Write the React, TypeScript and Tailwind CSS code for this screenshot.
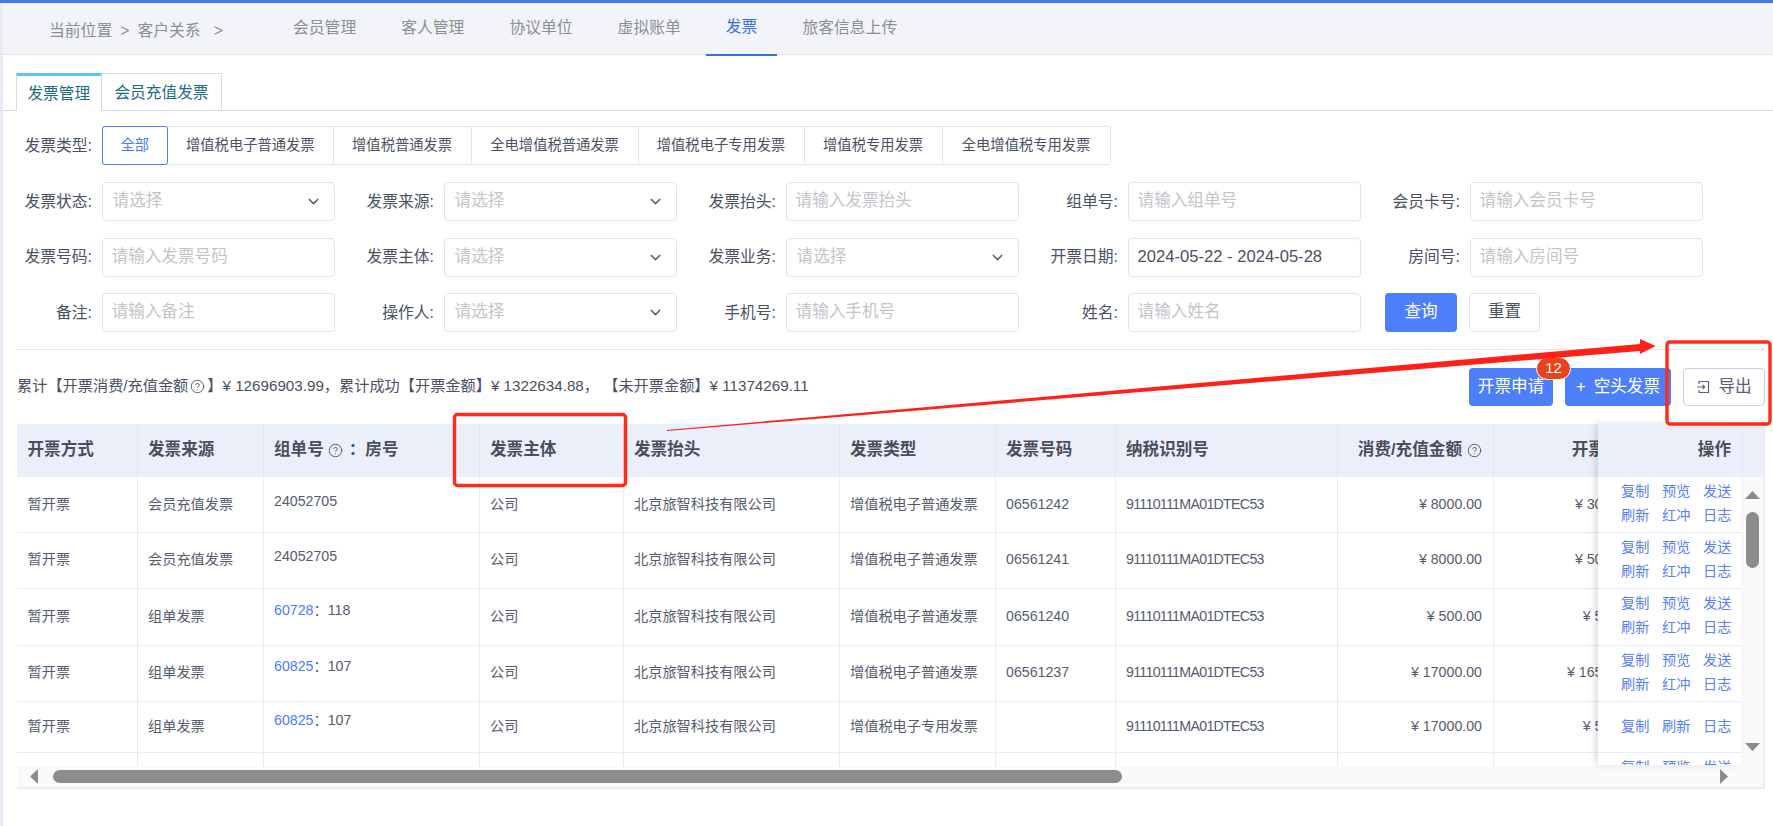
import React from "react";
import { ChevronDown, CircleHelp } from "lucide-react";

const headers = [
  { t: "开票方式", w: "w-[120.5px]" },
  { t: "发票来源", w: "w-[126px]" },
  { t: "组单号", w: "w-[216px]" },
  { t: "发票主体", w: "w-[144px]" },
  { t: "发票抬头", w: "w-[216px]" },
  { t: "发票类型", w: "w-[156px]" },
  { t: "发票号码", w: "w-[120px]" },
  { t: "纳税识别号", w: "w-[222px]" },
  { t: "消费/充值金额", w: "w-[156px]" },
  { t: "开票金额", w: "w-[156px]" },
];

const rows = [
  { h: "h-[55.5px]", src: "会员充值发票", plain: "24052705", link: "", room: "", pad: "pb-[6px]", type: "增值税电子普通发票", no: "06561242", amt: "¥ 8000.00", inv: "¥ 3000.00", two: true },
  { h: "h-[56px]", src: "会员充值发票", plain: "24052705", link: "", room: "", pad: "pb-[6px]", type: "增值税电子普通发票", no: "06561241", amt: "¥ 8000.00", inv: "¥ 5000.00", two: true },
  { h: "h-[57px]", src: "组单发票", plain: "", link: "60728", room: "118", pad: "pb-[12px]", type: "增值税电子普通发票", no: "06561240", amt: "¥ 500.00", inv: "¥ 500.00", two: true },
  { h: "h-[56px]", src: "组单发票", plain: "", link: "60825", room: "107", pad: "pb-[12px]", type: "增值税电子普通发票", no: "06561237", amt: "¥ 17000.00", inv: "¥ 16500.00", two: true },
  { h: "h-[51px]", src: "组单发票", plain: "", link: "60825", room: "107", pad: "pb-[12px]", type: "增值税电子专用发票", no: "", amt: "¥ 17000.00", inv: "¥ 500.00", two: false },
];

const typeButtons = [
  { t: "增值税电子普通发票", w: "w-[165.5px]" },
  { t: "增值税普通发票", w: "w-[138px]" },
  { t: "全电增值税普通发票", w: "w-[167px]" },
  { t: "增值税电子专用发票", w: "w-[166px]" },
  { t: "增值税专用发票", w: "w-[138px]" },
  { t: "全电增值税专用发票", w: "w-[167px]" },
];

function Field({ label, children }: { label: string; children: React.ReactNode }) {
  return (
    <div className="flex w-[318px] items-center">
      <div className="mr-[9.6px] w-[75px] text-right text-[15.8px] whitespace-nowrap text-[#4a5163]">{label}:</div>
      {children}
    </div>
  );
}

function TextBox({ text, value }: { text: string; value?: boolean }) {
  return (
    <div className={`flex h-[39px] w-[233.4px] items-center rounded-[4px] border border-[#e0e4ef] pl-[9px] text-[16.6px] whitespace-nowrap ${value ? "text-[#4a5163]" : "text-[#c3c5ca]"}`}>
      {text}
    </div>
  );
}

function SelectBox() {
  return (
    <div className="flex h-[39px] w-[233.4px] items-center justify-between rounded-[4px] border border-[#e0e4ef] pr-[12px] pl-[10px] text-[16.6px] text-[#c3c5ca]">
      <span>请选择</span>
      <ChevronDown size={17} strokeWidth={2} className="text-[#5a6478]" />
    </div>
  );
}

function OpLine({ items }: { items: string[] }) {
  return (
    <div className="flex h-[24px] items-center justify-end gap-[13px] pr-[10px] text-[14.2px] text-[#5a80f5]">
      {items.map((x) => (
        <span key={x} className="w-[28px] whitespace-nowrap">{x}</span>
      ))}
    </div>
  );
}

function HelpIcon() {
  return <CircleHelp size={15} strokeWidth={1.6} className="shrink-0 font-normal text-[#5c6272]" />;
}

export default function App() {
  return (
    <div className="relative h-[826px] w-full overflow-hidden bg-white [font-family:'Liberation_Sans','Noto_Sans_CJK_SC',sans-serif]">
      <div className="h-[3px] bg-[#3f78ee]" />
      <div className="h-[823px] border-l-[3px] border-[#e8eaf5]">
        {/* top navigation */}
        <header className="flex h-[52px] items-stretch border-b border-[#e2e4e8] bg-[#f2f4f8]">
          <div className="flex w-[270px] items-center pt-[5px] pl-[46px] text-[15.8px] text-[#8b8f98]">
            <span>当前位置</span>
            <span className="ml-[8px]">&gt;</span>
            <span className="ml-[8px]">客户关系</span>
            <span className="ml-[13px]">&gt;</span>
          </div>
          <nav className="flex gap-[5px] text-[15.8px] text-[#8b8f98]">
            {["会员管理", "客人管理", "协议单位", "虚拟账单", "发票", "旅客信息上传"].map((t) => (
              <div
                key={t}
                className={`flex h-[53px] items-center px-[20px] pb-[4px] ${t === "发票" ? "border-b-2 border-[#3a6fdc] text-[#3a6fdc]" : ""}`}
              >
                {t}
              </div>
            ))}
          </nav>
        </header>

        {/* sub tabs */}
        <div className="mt-[18px] flex h-[38px] border-b border-[#d8dde3] pl-[12.5px] text-[15.7px] text-[#1f6b80]">
          <div className="flex h-[38px] w-[86.5px] items-center justify-center border-t-[3px] border-r border-l border-t-[#5ec6ee] border-r-[#d5dbe0] border-l-[#d5dbe0] bg-white">
            发票管理
          </div>
          <div className="flex h-[37px] w-[120px] items-center justify-center border-t border-r border-[#d5dbe0] pt-[1px]">
            会员充值发票
          </div>
        </div>

        <div className="pr-[8px] pl-[14px]">
          {/* invoice type */}
          <div className="mt-[15px] flex items-center">
            <div className="mr-[9.6px] w-[75px] text-right text-[15.8px] whitespace-nowrap text-[#4a5163]">发票类型:</div>
            <div className="flex h-[39px] rounded-[3px] border border-[#e0e4ef] text-[14.3px] text-[#4a5163]">
              <div className="-mt-px -mb-px -ml-px flex w-[66.5px] items-center justify-center rounded-[3px] border border-[#4a7cf6] text-[#4a7cf6]">全部</div>
              {typeButtons.map((b, i) => (
                <div key={b.t} className={`flex items-center justify-center ${b.w} ${i < typeButtons.length - 1 ? "border-r border-[#e0e4ef]" : ""}`}>
                  {b.t}
                </div>
              ))}
            </div>
          </div>

          {/* filters */}
          <div className="mt-[17px] flex flex-col gap-[16.5px]">
            <div className="flex gap-[24px]">
              <Field label="发票状态"><SelectBox /></Field>
              <Field label="发票来源"><SelectBox /></Field>
              <Field label="发票抬头"><TextBox text="请输入发票抬头" /></Field>
              <Field label="组单号"><TextBox text="请输入组单号" /></Field>
              <Field label="会员卡号"><TextBox text="请输入会员卡号" /></Field>
            </div>
            <div className="flex gap-[24px]">
              <Field label="发票号码"><TextBox text="请输入发票号码" /></Field>
              <Field label="发票主体"><SelectBox /></Field>
              <Field label="发票业务"><SelectBox /></Field>
              <Field label="开票日期"><TextBox text="2024-05-22 - 2024-05-28" value /></Field>
              <Field label="房间号"><TextBox text="请输入房间号" /></Field>
            </div>
            <div className="flex gap-[24px]">
              <Field label="备注"><TextBox text="请输入备注" /></Field>
              <Field label="操作人"><SelectBox /></Field>
              <Field label="手机号"><TextBox text="请输入手机号" /></Field>
              <Field label="姓名"><TextBox text="请输入姓名" /></Field>
              <div className="flex gap-[12px] text-[16.6px]">
                <div className="flex h-[39px] w-[72px] items-center justify-center rounded-[4px] bg-[#4d7ffb] text-white">查询</div>
                <div className="flex h-[39px] w-[71px] items-center justify-center rounded-[4px] border border-[#e0e4ef] text-[#4a5163]">重置</div>
              </div>
            </div>
          </div>

          <div className="mt-[17px] h-px bg-[#e2e5ee]" />

          {/* summary + actions */}
          <div className="mt-[18px] flex h-[38px] items-center justify-between">
            <div className="flex items-center pb-[1px] text-[15.2px] whitespace-nowrap text-[#4a5163]">
              累计【开票消费/充值金额
              <span className="mx-[2px]"><HelpIcon /></span>
              】¥ 12696903.99，累计成功【开票金额】¥ 1322634.88， 【未开票金额】¥ 11374269.11
            </div>
            <div className="flex items-stretch text-[16.6px] text-white">
              <div className="relative mr-[12px] flex h-[38px] w-[84px] items-center justify-center rounded-[4px] bg-[#4d7ffb] whitespace-nowrap">
                开票申请
                <span className="absolute top-[-11px] right-[-18px] flex h-[23px] w-[35px] items-center justify-center rounded-full border border-white bg-[#e8431a] text-[15px]">12</span>
              </div>
              <div className="mr-[12px] flex h-[38px] w-[106px] items-center justify-center gap-[8px] rounded-[4px] bg-[#4d7ffb] whitespace-nowrap">
                <span>+</span>
                <span>空头发票</span>
              </div>
              <div className="mr-[0px] flex h-[38px] w-[82px] items-center justify-center gap-[8px] rounded-[4px] border border-[#c5d0ef] text-[#5a6072]">
                <svg width="14" height="14" viewBox="0 0 14 14" fill="none" stroke="#5a6478" strokeWidth="1.2">
                  <path d="M3 4V1.5h9.5v11H3V10" />
                  <path d="M1 7h7.5M6.5 4.8 8.7 7 6.5 9.2" />
                </svg>
                <span>导出</span>
              </div>
            </div>
          </div>

          {/* table */}
          <div className="mt-[18px] w-[1748px] border-r-2 border-b-2 border-[#e9edf8]">
            <div className="flex">
              {/* scrolling columns */}
              <div className="w-[1581px] overflow-hidden">
                <div className="flex h-[53px] w-[1800px] items-center bg-[#eaeff9] text-[16.6px] font-bold text-[#4a4f5e]">
                  {headers.map((h, i) => (
                    <div
                      key={h.t}
                      className={`flex h-full shrink-0 items-center border-r border-[#e2e7f5] px-[10.5px] whitespace-nowrap ${h.w} ${i >= 8 ? "justify-end" : ""}`}
                    >
                      {i === 2 ? (
                        <span className="flex items-center gap-[4px]">组单号 <HelpIcon /> <span className="ml-[2px]">：房号</span></span>
                      ) : i === 8 ? (
                        <span className="flex items-center gap-[5px]">{h.t} <HelpIcon /></span>
                      ) : (
                        h.t
                      )}
                    </div>
                  ))}
                </div>
                {rows.map((r, i) => (
                  <div key={i} className={`flex w-[1800px] items-stretch border-b border-[#e8ecf7] text-[14.2px] text-[#555c6e] ${r.h}`}>
                    <Cell w="w-[120.5px]">暂开票</Cell>
                    <Cell w="w-[126px]">{r.src}</Cell>
                    <div className={`flex w-[216px] shrink-0 items-center border-r border-[#e8ecf7] px-[10.5px] whitespace-nowrap ${r.pad}`}>
                      {r.plain}
                      {r.link && <><span className="text-[#4a7cf6]">{r.link}</span>：{r.room}</>}
                    </div>
                    <Cell w="w-[144px]">公司</Cell>
                    <Cell w="w-[216px]">北京旅智科技有限公司</Cell>
                    <Cell w="w-[156px]">{r.type}</Cell>
                    <Cell w="w-[120px]">{r.no}</Cell>
                    <Cell w="w-[222px]"><span className="tracking-[-0.7px]">91110111MA01DTEC53</span></Cell>
                    <Cell w="w-[156px]" right>{r.amt}</Cell>
                    <Cell w="w-[156px]" right>{r.inv}</Cell>
                  </div>
                ))}
                <div className="flex h-[13px] w-[1800px]">
                  {headers.map((h) => (
                    <div key={h.t} className={`h-full shrink-0 border-r border-[#e8ecf7] ${h.w}`} />
                  ))}
                </div>
              </div>

              {/* fixed operations */}
              <div className="relative z-10 h-[341px] w-[143px] shrink-0 overflow-hidden bg-white shadow-[-3px_0_6px_rgba(0,0,0,0.13)]">
                <div className="flex h-[53px] items-center justify-end bg-[#eaeff9] pr-[10px] text-[16.6px] font-bold text-[#4a4f5e]">操作</div>
                {rows.map((r, i) => (
                  <div key={i} className={`border-b border-[#e8ecf7] ${r.h} ${r.two ? "pt-[3px]" : "flex items-center"}`}>
                    {r.two ? (
                      <>
                        <OpLine items={["复制", "预览", "发送"]} />
                        <OpLine items={["刷新", "红冲", "日志"]} />
                      </>
                    ) : (
                      <div className="w-full"><OpLine items={["复制", "刷新", "日志"]} /></div>
                    )}
                  </div>
                ))}
                <div className="pt-[3px]"><OpLine items={["复制", "预览", "发送"]} /></div>
              </div>

              {/* vertical scrollbar */}
              <div className="w-[22px] shrink-0 bg-[#fafafa]">
                <div className="h-[53px] bg-[#eaeff9]" />
                <svg width="15" height="8" viewBox="0 0 15 8" className="mt-[14px] ml-[4px] block"><path d="M7.5 0 15 8H0Z" fill="#8c8c8c" /></svg>
                <div className="mt-[13px] ml-[5px] h-[56px] w-[13px] rounded-full bg-[#8c8c8c]" />
                <svg width="15" height="8" viewBox="0 0 15 8" className="mt-[175px] ml-[4px] block"><path d="M0 0h15L7.5 8Z" fill="#8c8c8c" /></svg>
              </div>
            </div>

            {/* horizontal scrollbar */}
            <div className="flex h-[21px] items-center bg-[#fafafa]">
              <svg width="8" height="15" viewBox="0 0 8 15" className="ml-[13px] block"><path d="M8 0v15L0 7.5Z" fill="#8c8c8c" /></svg>
              <div className="ml-[15px] h-[13px] w-[1069px] rounded-full bg-[#8c8c8c]" />
              <svg width="8" height="15" viewBox="0 0 8 15" className="ml-[598px] block"><path d="M0 0v15l8-7.5Z" fill="#8c8c8c" /></svg>
            </div>
          </div>
        </div>
      </div>

      {/* red annotations drawn on top of the screenshot */}
      <svg className="pointer-events-none absolute top-0 left-0 z-20" width="1773" height="826" viewBox="0 0 1773 826" fill="none">
        <polygon points="667,430 1640,344 1640,339 1655.6,346 1640,354 1640,351 667,431" fill="#ff2018" />
        <rect x="1667" y="342" width="103" height="82" rx="3" stroke="#ff2a1a" strokeWidth="3.4" />
        <rect x="454.5" y="414.5" width="171" height="71" rx="3" stroke="#ff2a1a" strokeWidth="3.4" />
      </svg>
    </div>
  );
}

function Cell({ w, right, children }: { w: string; right?: boolean; children: React.ReactNode }) {
  return (
    <div className={`flex shrink-0 items-center border-r border-[#e8ecf7] px-[10.5px] whitespace-nowrap ${w} ${right ? "justify-end" : ""}`}>
      {children}
    </div>
  );
}
